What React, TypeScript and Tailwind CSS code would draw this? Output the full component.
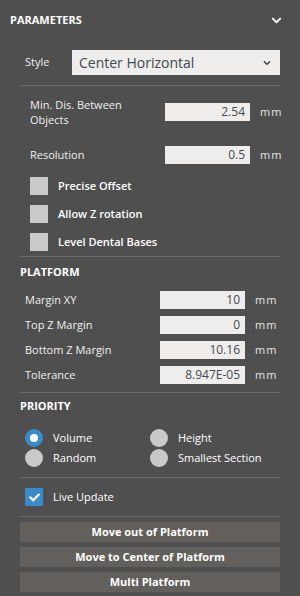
import React, { useState } from 'react';
import { FaChevronDown, FaCheck } from 'react-icons/fa';

const font = { fontFamily: '"Open Sans", "Liberation Sans", sans-serif' };

// numeric field with a unit on the right
const NumField = ({ value }: { value: string }) => (
  <div className="flex items-center">
    <div className="w-[85px] h-[18px] bg-[#eeedeb] text-[#444a52] text-[12px] leading-[18px] text-right pr-[5px]">{value}</div>
    <span className="ml-[10px] text-[11px] text-[#e6e6e6] tracking-[1px]">mm</span>
  </div>
);

const Separator = () => <div className="mx-[20px] h-px bg-[#6a6a6a]" />;

const Check = ({ label }: { label: string }) => (
  <div className="flex items-center h-[18px]">
    <div className="w-[18px] h-[18px] bg-[#c9c9c9]" />
    <span className="ml-[10px] text-[11px] font-semibold text-white">{label}</span>
  </div>
);

const Radio = ({ label, checked }: { label: string; checked?: boolean }) => (
  <div className="flex items-center h-[18px] w-[125px]">
    {checked ? (
      <div className="w-[18px] h-[18px] rounded-full bg-[#3b8bc9] flex items-center justify-center">
        <div className="w-[8px] h-[8px] rounded-full bg-white" />
      </div>
    ) : (
      <div className="w-[18px] h-[18px] rounded-full bg-[#c9c9c9]" />
    )}
    <span className="ml-[10px] text-[11px] text-white">{label}</span>
  </div>
);

const ActionButton = ({ label }: { label: string }) => (
  <button className="mx-[20px] h-[20px] bg-[#635f5c] text-white text-[11px] font-bold leading-[20px] text-center">{label}</button>
);

const App: React.FC = () => {
  const [live, setLive] = useState(true);
  const platformRows = [
    ['Margin XY', '10'],
    ['Top Z Margin', '0'],
    ['Bottom Z Margin', '10.16'],
    ['Tolerance', '8.947E-05'],
  ];

  return (
    <div className="w-[300px] h-[596px] bg-[#4f4f4f] flex flex-col text-white overflow-hidden" style={font}>
      {/* Header */}
      <div className="h-[40px] flex items-center justify-between pl-[10px] pr-[18px]">
        <span className="text-[11px] font-bold">PARAMETERS</span>
        <FaChevronDown className="text-white w-[11px] h-[11px]" />
      </div>

      {/* Style */}
      <div className="flex items-center mt-[10px] pl-[25px] h-[25px]">
        <span className="w-[47px] text-[11px] text-[#f0f0f0]">Style</span>
        <div className="w-[208px] h-[25px] bg-[#eeedeb] flex items-center justify-between pl-[7px] pr-[9px]">
          <span className="text-[14px] text-[#3f4954]">Center Horizontal</span>
          <FaChevronDown className="text-[#333] w-[8px] h-[8px]" />
        </div>
      </div>

      <div className="mt-[10px]"><Separator /></div>

      {/* Min distance */}
      <div className="flex items-center mt-[11px] pl-[30px]">
        <span className="w-[135px] text-[11px] leading-[15px] text-[#f0f0f0]">Min. Dis. Between<br />Objects</span>
        <NumField value="2.54" />
      </div>
      <div className="flex items-center mt-[19px] pl-[30px]">
        <span className="w-[135px] text-[11px] text-[#f0f0f0]">Resolution</span>
        <NumField value="0.5" />
      </div>

      <div className="flex flex-col gap-[10px] mt-[13px] pl-[30px]">
        <Check label="Precise Offset" />
        <Check label="Allow Z rotation" />
        <Check label="Level Dental Bases" />
      </div>

      <div className="mt-[5px]"><Separator /></div>

      {/* Platform */}
      <div className="pl-[20px] mt-[8px] text-[11px] font-bold leading-[14px]">PLATFORM</div>
      <div className="flex flex-col gap-[7px] mt-[12px] pl-[25px]">
        {platformRows.map(([l, v]) => (
          <div key={l} className="flex items-center h-[18px]">
            <span className="w-[135px] text-[11px] text-[#f0f0f0]">{l}</span>
            <NumField value={v} />
          </div>
        ))}
      </div>

      <div className="mt-[8px]"><Separator /></div>

      {/* Priority */}
      <div className="pl-[20px] mt-[6px] text-[11px] font-bold leading-[14px]">PRIORITY</div>
      <div className="pl-[25px] mt-[16px] flex flex-col gap-[2px]">
        <div className="flex">
          <Radio label="Volume" checked />
          <Radio label="Height" />
        </div>
        <div className="flex">
          <Radio label="Random" />
          <Radio label="Smallest Section" />
        </div>
      </div>

      <div className="mt-[10px]"><Separator /></div>

      <div className="pl-[25px] mt-[10px] flex items-center h-[18px]" onClick={() => setLive(!live)}>
        <div className="w-[18px] h-[18px] bg-[#3b8bc9] flex items-center justify-center">
          {live && <FaCheck className="text-white w-[11px] h-[11px]" />}
        </div>
        <span className="ml-[10px] text-[11px] text-white">Live Update</span>
      </div>

      <div className="mt-[10px]"><Separator /></div>

      <div className="flex flex-col gap-[5px] mt-[5px]">
        <ActionButton label="Move out of Platform" />
        <ActionButton label="Move to Center of Platform" />
        <ActionButton label="Multi Platform" />
      </div>
    </div>
  );
};

export default App;
